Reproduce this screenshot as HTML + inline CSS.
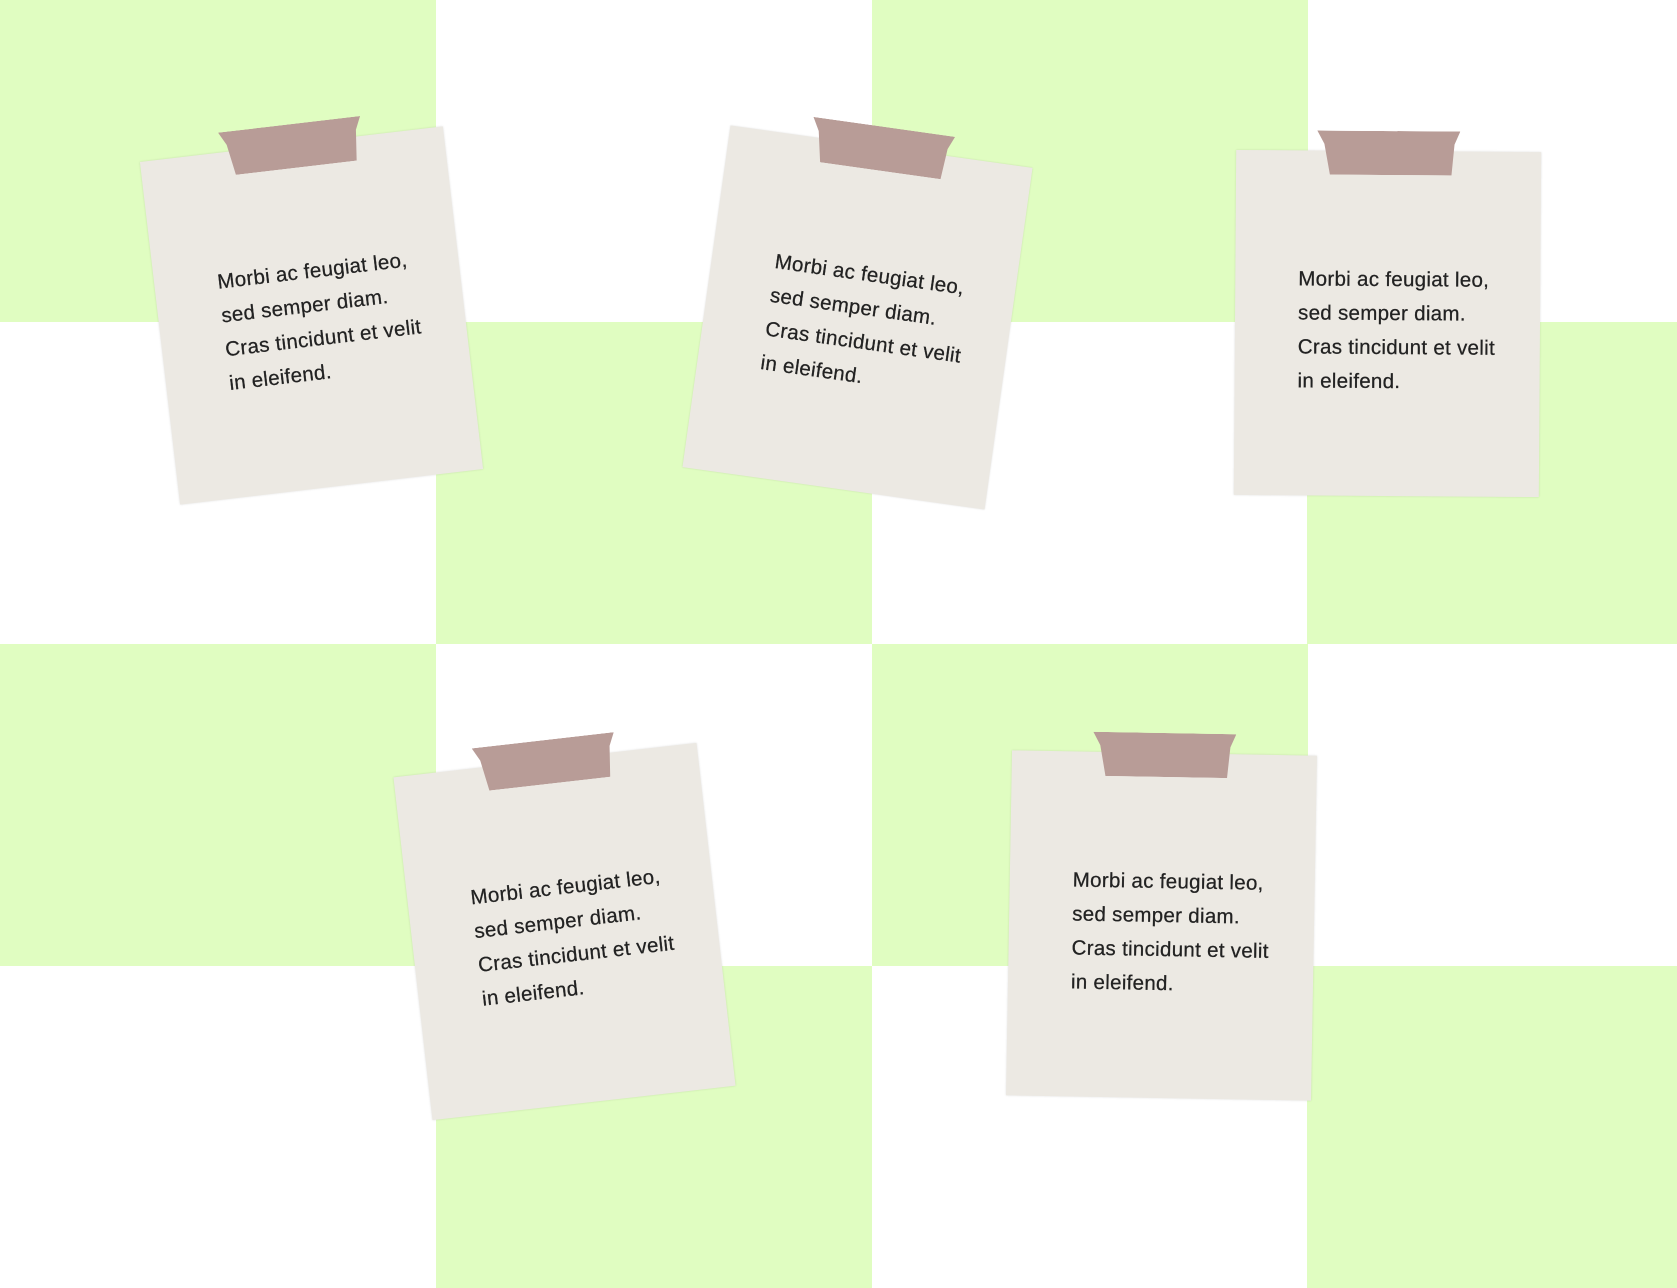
<!DOCTYPE html>
<html><head><meta charset="utf-8"><style>
html,body{margin:0;padding:0}
body{width:1677px;height:1288px;position:relative;overflow:hidden;background:#fff;font-family:"Liberation Sans",sans-serif}
.c{position:absolute;width:436px;height:322px;background:#e0fdc1}
.n{position:absolute;width:305px;height:345px;background:#ece9e3;box-shadow:0 0 2px rgba(0,0,0,.12);}
.n::before{content:"";position:absolute;left:81px;top:-20px;width:143px;height:44px;background:#b89c97;clip-path:polygon(0 0,100% 0,96% 30%,94% 100%,9% 100%,5% 30%)}
.t{position:absolute;left:63px;top:112px;font-size:20.5px;line-height:34px;color:#222;white-space:nowrap;letter-spacing:.3px;-webkit-text-stroke:.25px #222}
</style></head><body>
<div class="c" style="left:0;top:0"></div>
<div class="c" style="left:872px;top:0"></div>
<div class="c" style="left:436px;top:322px"></div>
<div class="c" style="left:1307px;top:322px;width:370px"></div>
<div class="c" style="left:0;top:644px"></div>
<div class="c" style="left:872px;top:644px"></div>
<div class="c" style="left:436px;top:966px"></div>
<div class="c" style="left:1307px;top:966px;width:370px"></div>

<div class="n" style="left:159px;top:143px;transform:rotate(-6.7deg)"><div class="t">Morbi ac feugiat leo,<br>sed semper diam.<br>Cras tincidunt et velit<br>in eleifend.</div></div>
<div class="n" style="left:705px;top:145px;transform:rotate(8deg)"><div class="t">Morbi ac feugiat leo,<br>sed semper diam.<br>Cras tincidunt et velit<br>in eleifend.</div></div>
<div class="n" style="left:1235px;top:151px;transform:rotate(0.4deg)"><div class="t">Morbi ac feugiat leo,<br>sed semper diam.<br>Cras tincidunt et velit<br>in eleifend.</div></div>
<div class="n" style="left:412px;top:759px;transform:rotate(-6.5deg)"><div class="t">Morbi ac feugiat leo,<br>sed semper diam.<br>Cras tincidunt et velit<br>in eleifend.</div></div>
<div class="n" style="left:1009px;top:753px;transform:rotate(1deg)"><div class="t">Morbi ac feugiat leo,<br>sed semper diam.<br>Cras tincidunt et velit<br>in eleifend.</div></div>
</body></html>
